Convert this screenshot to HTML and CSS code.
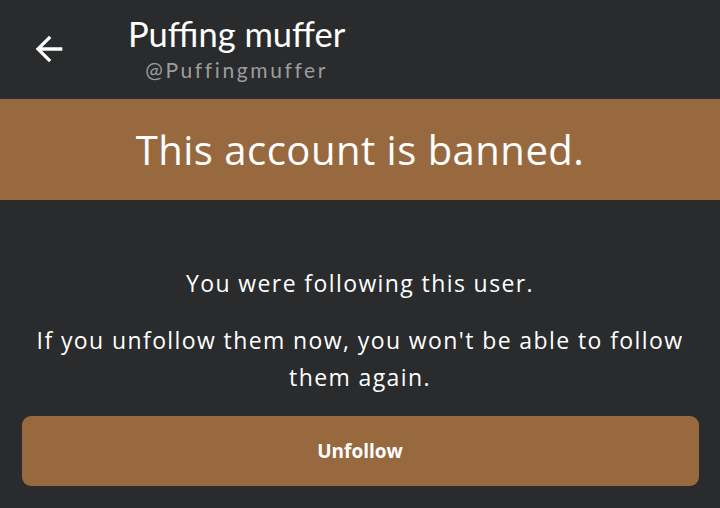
FILE: index.html
```html
<!DOCTYPE html>
<html>
<head>
<meta charset="utf-8">
<link rel="stylesheet" href="styles.css">
</head>
<body>
<header class="topbar">
  <button class="back" aria-label="Back">
    <svg width="40" height="40" viewBox="0 0 24 24"><path d="M20 11H7.83l5.59-5.59L12 4l-8 8 8 8 1.41-1.41L7.83 13H20v-2z" fill="#fff"/></svg>
  </button>
  <div class="names">
    <div class="display">Puffing muffer</div>
    <div class="handle">@Puffingmuffer</div>
  </div>
</header>
<div class="banner">This account is banned.</div>
<main class="content">
  <p class="msg first">You were following this user.</p>
  <p class="msg">If you unfollow them now, you won't be able to follow them again.</p>
  <button class="unfollow">Unfollow</button>
</main>
</body>
</html>
```
FILE: styles.css
```css
html, body { margin: 0; padding: 0; }
body {
  width: 720px;
  height: 508px;
  background: #292b2d;
  color: #fff;
  font-family: "Open Sans", "Noto Sans", sans-serif;
  overflow: hidden;
}
.topbar {
  height: 99px;
  display: flex;
  align-items: flex-start;
  background: #292b2d;
}
.back {
  background: none;
  border: 0;
  padding: 0;
  margin: 29px 0 0 29px;
  width: 40px;
  height: 40px;
  display: flex;
}
.names {
  margin-left: 59px;
  margin-top: 13px;
  display: flex;
  flex-direction: column;
  align-items: center;
  font-family: "Lato", sans-serif;
}
.display {
  font-size: 34.5px;
  line-height: 42px;
  color: #fff;
}
.handle {
  margin-top: 2px;
  font-size: 21px;
  line-height: 26px;
  letter-spacing: 2.6px;
  font-variant-ligatures: none;
  color: #9c9d9e;
}
.banner {
  height: 101px;
  background: #98693f;
  display: flex;
  align-items: center;
  justify-content: center;
  font-size: 40px;
  color: #fff;
  letter-spacing: 0.5px;
}
.content {
  padding: 0 21px;
  display: flex;
  flex-direction: column;
  align-items: center;
}
.msg {
  margin: 0;
  text-align: center;
  font-size: 23px;
  line-height: 37px;
  letter-spacing: 1.4px;
  color: #fff;
}
.msg.first { margin-top: 65px; margin-bottom: 20px; }
.unfollow {
  margin-top: 20px;
  width: 677px;
  height: 70px;
  border: 0;
  border-radius: 9px;
  background: #98693f;
  color: #fff;
  font-family: "Open Sans", sans-serif;
  font-weight: bold;
  font-size: 19px;
}
```
